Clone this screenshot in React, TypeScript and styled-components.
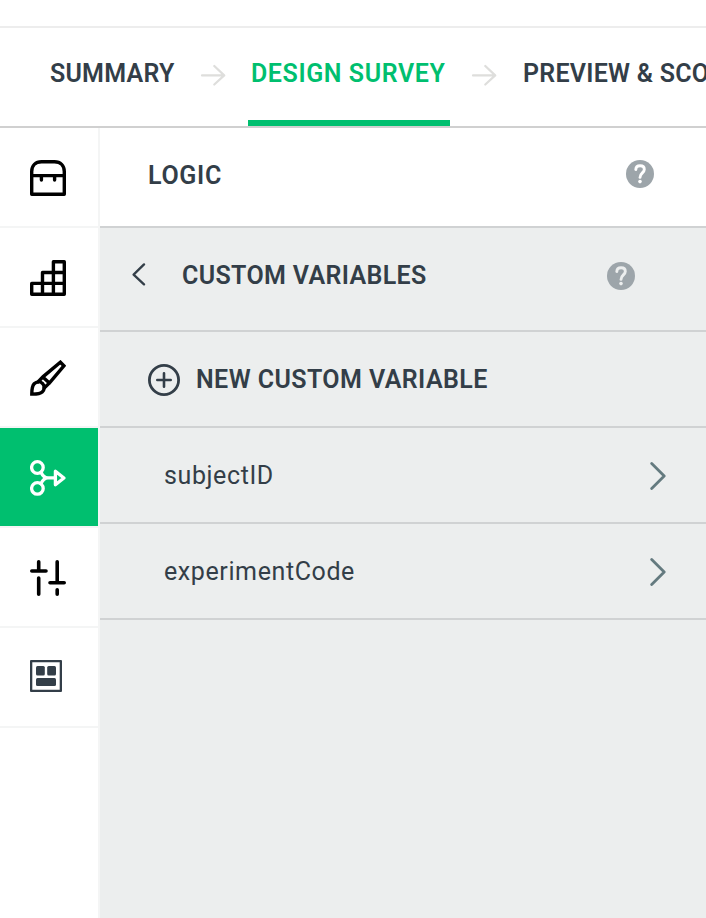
import React from "react";
import styled, { createGlobalStyle } from "styled-components";

const GlobalStyle = createGlobalStyle`
  *, *::before, *::after { box-sizing: border-box; }
  body { margin: 0; background: #fff; overflow: hidden; }
  svg { display: block; flex: none; }
`;

const ink = "#333e48";
const green = "#00bf6f";
const line = "#d0d2d3";
const faint = "#f4f5f5";

const Page = styled.div`
  width: 100%;
  height: 918px;
  display: flex;
  flex-direction: column;
  overflow: hidden;
  color: ${ink};
  font-family: Roboto, "Liberation Sans", sans-serif;
  font-size: 25px;
`;

const TopStrip = styled.div`
  flex: none;
  height: 28px;
  border-bottom: 2px solid #ededed;
`;

const StepNav = styled.nav`
  flex: none;
  display: flex;
  height: 100px;
  padding-left: 46px;
  border-bottom: 2px solid #d0d0d0;
  overflow: hidden;
`;

const Step = styled.a<{ $width: number; $active?: boolean; $spacing: number }>`
  flex: none;
  width: ${(p) => p.$width}px;
  padding: 31px 0 0 ${(p) => (p.$active ? 3 : 4)}px;
  line-height: 30px;
  font-weight: 600;
  white-space: nowrap;
  letter-spacing: ${(p) => p.$spacing}px;
  color: ${(p) => (p.$active ? green : ink)};
  border-bottom: 6px solid ${(p) => (p.$active ? green : "transparent")};
`;

const StepArrow = styled.svg<{ $before: number }>`
  width: 26px;
  height: 22px;
  margin: 36px 22px 0 ${(p) => p.$before}px;
`;

const Body = styled.div`
  flex: 1;
  display: flex;
  min-height: 0;
`;

const Sidebar = styled.aside`
  flex: none;
  width: 100px;
  border-right: 2px solid ${faint};
`;

const SideItem = styled.button<{ $active?: boolean }>`
  display: flex;
  align-items: flex-start;
  width: 98px;
  height: 100px;
  padding: 32px 0 0 30px;
  border: 0;
  border-bottom: 2px solid ${faint};
  background: ${(p) => (p.$active ? green : "#fff")};
  background-clip: padding-box;
  color: ${(p) => (p.$active ? "#fff" : "#000")};
`;

const Panel = styled.main`
  flex: 1;
  min-width: 0;
  background: #eceeee;
`;

const Row = styled.div<{ $height: number; $left: number; $right?: number; $white?: boolean }>`
  display: flex;
  align-items: center;
  height: ${(p) => p.$height}px;
  padding: 2px ${(p) => p.$right ?? 0}px 0 ${(p) => p.$left}px;
  border-bottom: 2px solid ${line};
  background: ${(p) => (p.$white ? "#fff" : "transparent")};
`;

const Label = styled.span<{ $bold?: boolean; $spacing: number; $indent?: number; $lift?: number }>`
  flex: 1;
  margin-left: ${(p) => p.$indent ?? 0}px;
  padding-bottom: ${(p) => p.$lift ?? 0}px;
  line-height: 30px;
  white-space: nowrap;
  font-weight: ${(p) => (p.$bold ? 600 : 400)};
  letter-spacing: ${(p) => p.$spacing}px;
`;

const HelpSvg = styled.svg<{ $lift: number }>`
  width: 28px;
  height: 28px;
  margin-bottom: ${(p) => p.$lift}px;
`;

const BackSvg = styled.svg`
  width: 16px;
  height: 24px;
  margin-bottom: 12px;
`;

const Arrow = ({ before = 22 }: { before?: number }) => (
  <StepArrow $before={before} viewBox="0 0 26 22" fill="none" stroke="#dededc" strokeWidth="2.2" strokeLinecap="round" strokeLinejoin="round">
    <path d="M2 11.4H24M14.3 2L24.2 11.4L14.3 20.5" />
  </StepArrow>
);

const Help = ({ mark, lift }: { mark: string; lift: number }) => (
  <HelpSvg $lift={lift} viewBox="0 0 28 28" fill="none">
    <circle cx="14" cy="14" r="14" fill="#9da5aa" />
    <path d="M9.8 9.6C9.9 7 11.6 5.8 14.1 5.8C16.6 5.8 18.3 7.2 18.3 9.4C18.3 12.8 14 13 14 17.4" stroke={mark} strokeWidth="2.9" strokeLinecap="round" />
    <circle cx="14" cy="21.6" r="1.8" fill={mark} />
  </HelpSvg>
);

const Back = () => (
  <BackSvg viewBox="0 0 16 24" fill="none" stroke={ink} strokeWidth="2.3" strokeLinecap="round" strokeLinejoin="round">
    <path d="M13 2.4L2.6 12.6L13 22.4" />
  </BackSvg>
);

const Chevron = () => (
  <svg width="18" height="30" viewBox="0 0 18 30" fill="none" stroke="#647a7f" strokeWidth="2.8" strokeLinecap="round" strokeLinejoin="round">
    <path d="M3.7 2.6L16.2 15L3.7 27.4" />
  </svg>
);

const Plus = () => (
  <svg width="32" height="32" viewBox="0 0 32 32" fill="none" stroke={ink} strokeWidth="2.8" strokeLinecap="round">
    <circle cx="16" cy="16" r="14.6" />
    <path d="M9.3 16H22.7M16 9.3V22.7" strokeWidth="2.6" />
  </svg>
);

const SideIcon = ({ children }: { children: React.ReactNode }) => (
  <svg width="36" height="36" viewBox="0 0 36 36" fill="none" stroke="currentColor" strokeWidth="3.4" strokeLinecap="round" strokeLinejoin="round">
    {children}
  </svg>
);

const sideIcons: { key: string; active?: boolean; drawing: React.ReactNode }[] = [
  {
    key: "bank",
    drawing: (
      <path d="M1.7 34.3V11.5C1.7 5.6 5.6 1.7 11.5 1.7H24.5C30.4 1.7 34.3 5.6 34.3 11.5V34.3ZM1.7 15.6H34.3M11.4 15.6V20M24.6 15.6V20" />
    ),
  },
  {
    key: "builder",
    drawing: (
      <path d="M1.7 34.3V23.4H34.3M12.5 34.3V12.5H34.3M23.4 34.3V1.7H34.3V34.3H1.7" />
    ),
  },
  {
    key: "themes",
    drawing: (
      <g strokeWidth="3.4" strokeLinejoin="miter">
        <path d="M1.8 34.1C1.8 29.4 1.9 26.2 4.2 23.8C6.6 21.4 10.2 21.2 12.5 23.4C14.8 25.8 14.8 29.6 12.2 32C9.9 34.2 6.6 34.1 1.8 34.1Z" />
        <path d="M8 22L13.2 16.6L30.4 2.2L33.9 5.8L20 22.4L14.2 28M12.8 17L19.4 23" />
      </g>
    ),
  },
  {
    key: "logic",
    active: true,
    drawing: (
      <g strokeWidth="3.3">
        <circle cx="7.4" cy="7.5" r="5.8" />
        <circle cx="7.4" cy="28.4" r="5.8" />
        <path d="M11 12.2C12.5 15.5 14.5 17.9 18 17.9M11 23.7C12.5 20.3 14.5 17.9 18 17.9H25M25.4 11.2V24.8L33.9 18Z" />
      </g>
    ),
  },
  {
    key: "options",
    drawing: (
      <path strokeWidth="3.6" d="M8.7 1.8V11M1.8 11H16M8.7 18V34.2M27.2 1.8V22.7M20 22.7H34.2M27.2 29.7V34.2" />
    ),
  },
  {
    key: "format",
    drawing: (
      <g stroke="none" fill={ink}>
        <path fillRule="evenodd" d="M1 0H31Q32 0 32 1V31Q32 32 31 32H1Q0 32 0 31V1Q0 0 1 0ZM2.3 2.3V29.7H29.7V2.3Z" />
        <rect x="6" y="6" width="8.8" height="9.4" rx="1.5" />
        <rect x="17.2" y="6" width="8.8" height="9.4" rx="1.5" />
        <rect x="6" y="18" width="20" height="8" rx="1.5" />
      </g>
    ),
  },
];

const variables = [
  { name: "subjectID", spacing: 0.6 },
  { name: "experimentCode", spacing: 0.6 },
];

export default function App() {
  return (
    <Page>
      <GlobalStyle />
      <TopStrip />
      <StepNav>
        <Step $width={132} $spacing={0.22}>SUMMARY</Step>
        <Arrow />
        <Step $width={202} $spacing={0.58} $active>DESIGN SURVEY</Step>
        <Arrow before={21} />
        <Step $width={230} $spacing={0.25}>PREVIEW &amp; SCORE</Step>
      </StepNav>
      <Body>
        <Sidebar>
          {sideIcons.map((item) => (
            <SideItem key={item.key} $active={item.active}>
              <SideIcon>{item.drawing}</SideIcon>
            </SideItem>
          ))}
        </Sidebar>
        <Panel>
          <Row $height={100} $left={48} $right={52} $white>
            <Label $bold $spacing={0.7} $lift={4}>LOGIC</Label>
            <Help mark="#fff" lift={8} />
          </Row>
          <Row $height={104} $left={31} $right={71}>
            <Back />
            <Label $bold $spacing={0.34} $indent={35} $lift={8}>CUSTOM VARIABLES</Label>
            <Help mark="#eceeee" lift={8} />
          </Row>
          <Row $height={96} $left={48}>
            <Plus />
            <Label $bold $spacing={0.42} $indent={16}>NEW CUSTOM VARIABLE</Label>
          </Row>
          {variables.map((v) => (
            <Row key={v.name} $height={96} $left={64} $right={40}>
              <Label $spacing={v.spacing}>{v.name}</Label>
              <Chevron />
            </Row>
          ))}
        </Panel>
      </Body>
    </Page>
  );
}
